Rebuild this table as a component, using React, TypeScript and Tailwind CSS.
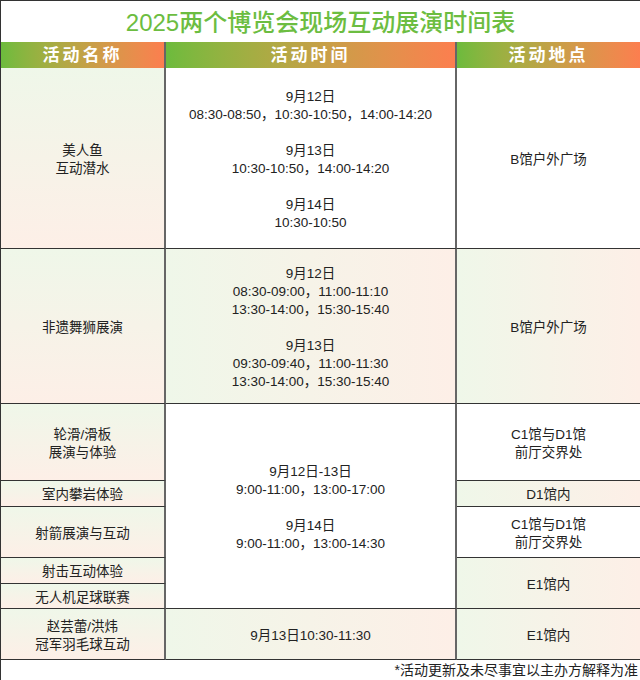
const font = {
  fontFamily: '"Liberation Sans", "Noto Sans CJK SC", sans-serif',
};

const leftCell =
  "flex items-center justify-center text-center pt-[3px] border-b border-[#333] border-r-2 border-r-[#666] bg-linear-to-b from-[#eff7e9] to-[#fdefe7]";
const midGrad =
  "flex items-center justify-center text-center pt-[3px] border-b border-[#333] border-r-2 border-r-[#666] bg-linear-to-r from-[#eff7e9] to-[#fdefe7]";
const midWhite =
  "flex items-center justify-center text-center pt-[3px] border-b border-[#333] border-r-2 border-r-[#666] bg-white";
const rightGrad =
  "flex items-center justify-center text-center pt-[3px] border-b border-[#333] bg-linear-to-r from-[#eff7e9] to-[#fdefe7]";
const rightWhite =
  "flex items-center justify-center text-center pt-[3px] border-b border-[#333] bg-white";
const head =
  "flex items-center justify-center pt-[1px] bg-linear-to-r from-[#6cbb3d] to-[#fc7e4f] text-white font-bold text-[17px] tracking-[3px]";

function Lines({ lines }: { lines: string[] }) {
  return (
    <div className="flex flex-col">
      {lines.map((l, i) => (
        <div key={i} className="h-[18px]">
          {l}
        </div>
      ))}
    </div>
  );
}

export default function App() {
  return (
    <div
      className="w-[640px] h-[680px] bg-white border-t border-l border-[#333] box-border flex flex-col text-[#222] text-[13.5px] leading-[18px]"
      style={font}
    >
      <div className="h-[41px] flex items-center justify-center pt-[3px] text-[24px] font-medium text-[#6cbd41]">
        2025两个博览会现场互动展演时间表
      </div>

      <div className="grid grid-cols-[165px_291px_1fr] grid-rows-[26px_181px_155px_77px_26px_51px_26px_25px_51px]">
        <div className={`${head} border-r-2 border-r-[#666]`}>活动名称</div>
        <div className={`${head} border-r-2 border-r-[#666]`}>活动时间</div>
        <div className={head}>活动地点</div>

        <div className={leftCell}>
          <Lines lines={["美人鱼", "互动潜水"]} />
        </div>
        <div className={midWhite}>
          <Lines
            lines={[
              "9月12日",
              "08:30-08:50，10:30-10:50，14:00-14:20",
              "",
              "9月13日",
              "10:30-10:50，14:00-14:20",
              "",
              "9月14日",
              "10:30-10:50",
            ]}
          />
        </div>
        <div className={rightWhite}>B馆户外广场</div>

        <div className={leftCell}>非遗舞狮展演</div>
        <div className={midGrad}>
          <Lines
            lines={[
              "9月12日",
              "08:30-09:00，11:00-11:10",
              "13:30-14:00，15:30-15:40",
              "",
              "9月13日",
              "09:30-09:40，11:00-11:30",
              "13:30-14:00，15:30-15:40",
            ]}
          />
        </div>
        <div className={rightGrad}>B馆户外广场</div>

        <div className={leftCell}>
          <Lines lines={["轮滑/滑板", "展演与体验"]} />
        </div>
        <div className={`${midWhite} row-span-5`}>
          <Lines
            lines={[
              "9月12日-13日",
              "9:00-11:00，13:00-17:00",
              "",
              "9月14日",
              "9:00-11:00，13:00-14:30",
            ]}
          />
        </div>
        <div className={rightWhite}>
          <Lines lines={["C1馆与D1馆", "前厅交界处"]} />
        </div>

        <div className={leftCell}>室内攀岩体验</div>
        <div className={rightGrad}>D1馆内</div>

        <div className={leftCell}>射箭展演与互动</div>
        <div className={rightWhite}>
          <Lines lines={["C1馆与D1馆", "前厅交界处"]} />
        </div>

        <div className={leftCell}>射击互动体验</div>
        <div className={`${rightGrad} row-span-2`}>E1馆内</div>
        <div className={leftCell}>无人机足球联赛</div>

        <div className={leftCell}>
          <Lines lines={["赵芸蕾/洪炜", "冠军羽毛球互动"]} />
        </div>
        <div className={midGrad}>9月13日10:30-11:30</div>
        <div className={rightGrad}>E1馆内</div>
      </div>

      <div className="flex-1 flex items-center justify-end pr-[2px] text-[14px]">
        *活动更新及未尽事宜以主办方解释为准
      </div>
    </div>
  );
}
